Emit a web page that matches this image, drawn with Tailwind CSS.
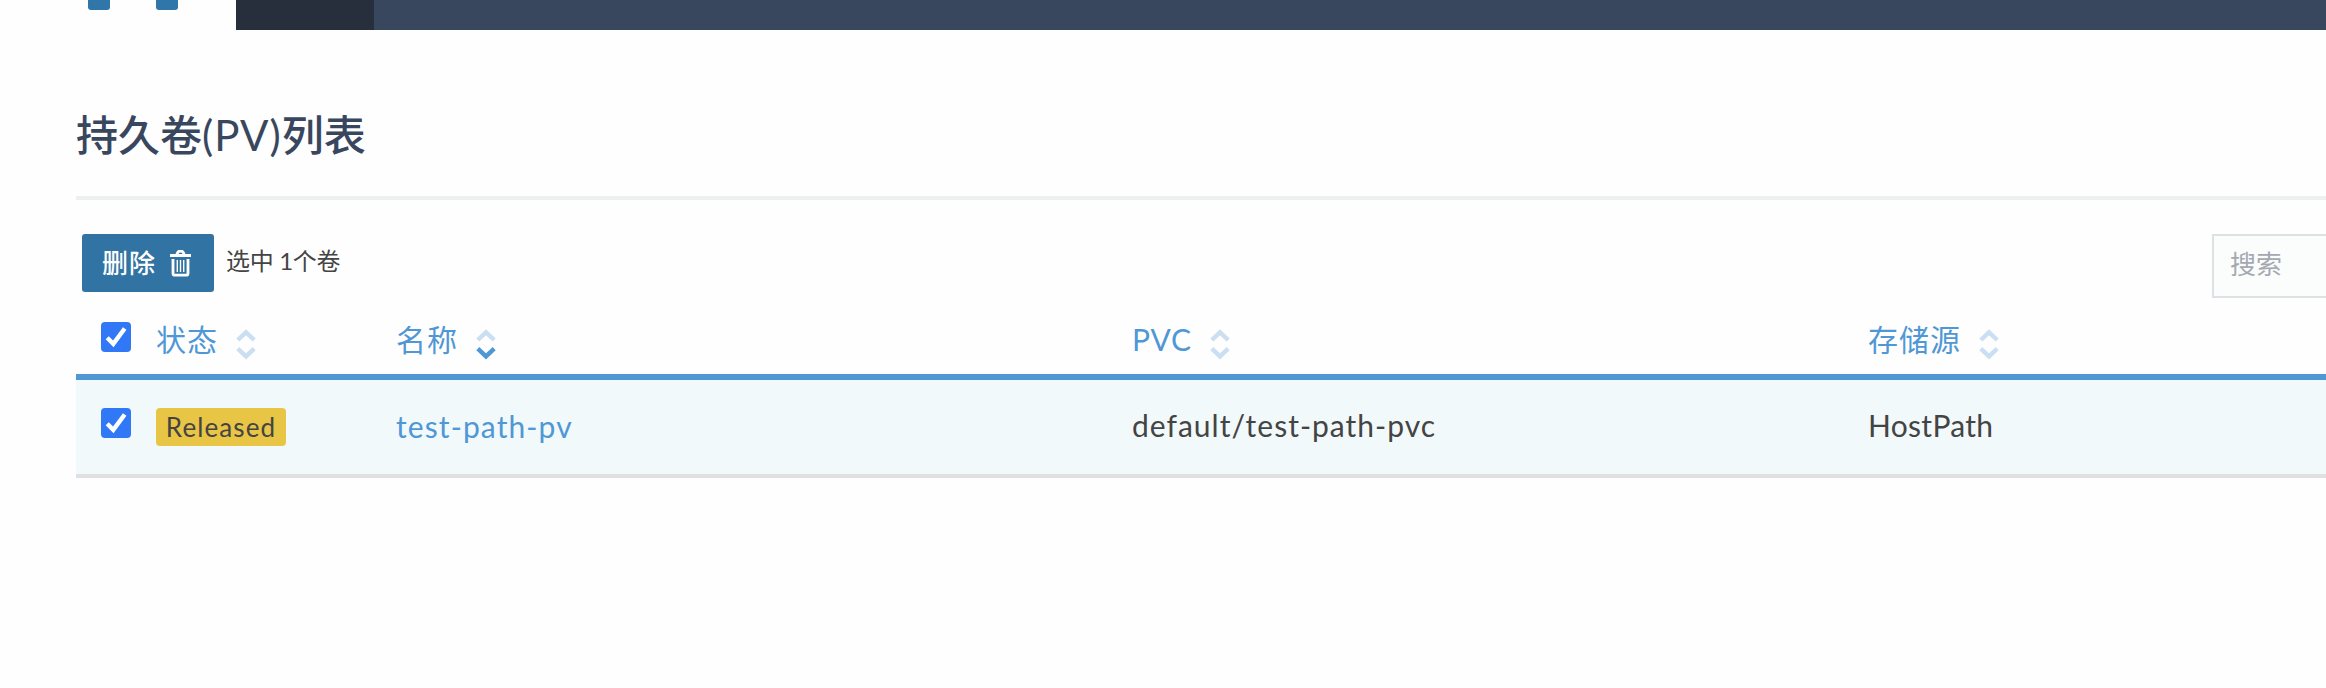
<!DOCTYPE html>
<html lang="zh-CN">
<head>
<meta charset="utf-8">
<title>持久卷(PV)列表</title>
<script src="https://cdn.jsdelivr.net/npm/@tailwindcss/browser@4"></script>
</head>
<body class="h-[688px] w-[2326px] overflow-hidden bg-[#fefefe] font-['Lato','Noto_Sans_CJK_SC',sans-serif] text-[30px] text-[#444]">
<svg class="hidden">
  <symbol id="up" viewBox="0 0 20 13"><path d="M1.8 11 10 3.3l8.2 7.7" fill="none" stroke="currentColor" stroke-width="4.4"/></symbol>
  <symbol id="down" viewBox="0 0 20 13"><path d="M1.8 1.7 10 9.4l8.2-7.7" fill="none" stroke="currentColor" stroke-width="4.4"/></symbol>
  <symbol id="check" viewBox="0 0 30 30"><path d="M6.2 15.8 12.3 21.8 23.7 6.5" fill="none" stroke="#fff" stroke-width="4.4"/></symbol>
</svg>
<header class="flex h-[30px]">
  <div class="flex w-[236px] gap-[46px] bg-[#fefefe] pl-[88px]">
    <span class="h-[10px] w-[22px] rounded-b-[3px] bg-[#3176a8]"></span>
    <span class="h-[10px] w-[22px] rounded-b-[3px] bg-[#3176a8]"></span>
  </div>
  <div class="w-[138px] bg-[#262f3b]"></div>
  <div class="flex-1 bg-[#38475e]"></div>
</header>
<main class="pl-[76px]">
  <h1 class="h-[170px] border-b-4 border-[#ecf0f1] pt-[63px] text-[42px] leading-[84px] text-[#38475e]"><span class="font-medium">持久卷</span><span class="tracking-[1px]">(PV)</span><span class="font-medium">列表</span></h1>
  <div class="flex h-[110px] items-start pl-[6px] pt-[34px]">
    <button class="flex h-[58px] w-[132px] items-center rounded-[3px] bg-[#3174a3] pl-[20px] text-[26px] font-medium leading-[58px] tracking-[1px] text-white">
      <span>删除</span>
      <svg class="ml-[13px] h-[27px] w-[23px]" viewBox="0 0 23 27">
        <path d="M1 5.6h21M8 4.8c0-5 7-5 7 0" fill="none" stroke="#fff" stroke-width="3"/>
        <path d="M4 9v14.5q0 1.7 1.7 1.7h11.6q1.7 0 1.7-1.7V9" fill="none" stroke="#fff" stroke-width="2.8"/>
        <path d="M8.3 10v12M11.5 10v12M14.7 10v12" stroke="#fff" stroke-width="1.4"/>
      </svg>
    </button>
    <span class="ml-[12px] text-[24px] leading-[54px] tracking-[-0.3px]">选中 1个卷</span>
    <div class="ml-auto h-[64px] w-[114px] border-2 border-r-0 border-[#dce2e4] bg-[#fbfdfd] pl-[16px] text-[26px] leading-[57px] text-[#a4a9b1]">搜索</div>
  </div>
  <div class="grid h-[70px] grid-cols-[80px_240px_736px_736px_1fr] border-b-[6px] border-[#5097d5] leading-[59px] text-[#5097d5]">
    <div class="pl-[25px] pt-[12px]"><svg class="h-[30px] w-[30px] rounded-[4px] bg-[#3178f7]"><use href="#check"/></svg></div>
    <div class="flex"><span class="tracking-[1px]">状态</span><div class="ml-[18px] mt-[19px] flex flex-col gap-[5px] text-[#cbdff3]"><svg class="h-[13px] w-5"><use href="#up"/></svg><svg class="h-[13px] w-5"><use href="#down"/></svg></div></div>
    <div class="flex"><span class="tracking-[1px]">名称</span><div class="ml-[18px] mt-[19px] flex flex-col gap-[5px] text-[#cbdff3]"><svg class="h-[13px] w-5"><use href="#up"/></svg><svg class="h-[13px] w-5 text-[#5097d5]"><use href="#down"/></svg></div></div>
    <div class="flex"><span class="w-[61px] tracking-[0.8px]">PVC</span><div class="ml-[17px] mt-[19px] flex flex-col gap-[5px] text-[#cbdff3]"><svg class="h-[13px] w-5"><use href="#up"/></svg><svg class="h-[13px] w-5"><use href="#down"/></svg></div></div>
    <div class="flex"><span class="tracking-[1px]">存储源</span><div class="ml-[18px] mt-[19px] flex flex-col gap-[5px] text-[#cbdff3]"><svg class="h-[13px] w-5"><use href="#up"/></svg><svg class="h-[13px] w-5"><use href="#down"/></svg></div></div>
  </div>
  <div class="grid h-[98px] grid-cols-[80px_240px_736px_736px_1fr] border-b-4 border-[#dfe0e0] bg-[#f1f9fb] leading-[90px]">
    <div class="pl-[25px] pt-[28px]"><svg class="h-[30px] w-[30px] rounded-[4px] bg-[#3178f7]"><use href="#check"/></svg></div>
    <div class="pt-[28px]"><div class="h-[38px] w-[130px] rounded-[4px] bg-[#e9c545] text-center text-[26px] leading-[38px] tracking-[1.1px]">Released</div></div>
    <div class="pt-px tracking-[1.1px] text-[#5097d5]">test-path-pv</div>
    <div class="tracking-[1px]">default/test-path-pvc</div>
    <div class="tracking-[0.3px]">HostPath</div>
  </div>
</main>
</body>
</html>
